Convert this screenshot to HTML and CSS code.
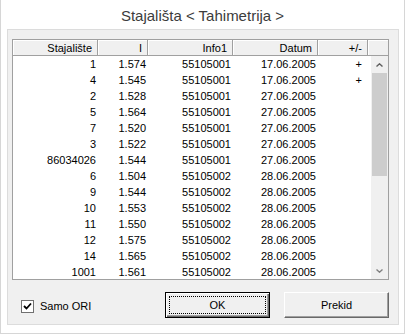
FILE: index.html
```html
<!DOCTYPE html>
<html lang="hr">
<head>
    <meta charset="UTF-8">
    <meta name="viewport" content="width=device-width, initial-scale=1.0">
    <title>Stajališta</title>
    <link rel="stylesheet" href="styles.css">
</head>
<body>
    <div class="window">
        <h1 class="title">Stajališta &lt; Tahimetrija &gt;</h1>

        <div class="panel">
            <div class="list">
                <div class="list-header">
                    <div class="hcell">Stajalište</div>
                    <div class="hcell">I</div>
                    <div class="hcell">Info1</div>
                    <div class="hcell">Datum</div>
                    <div class="hcell">+/-</div>
                    <div class="hcell"></div>
                </div>
                <div class="list-body">
                    <div class="rows">
                        <div class="row"><span>1</span><span>1.574</span><span>55105001</span><span>17.06.2005</span><span class="flag">+</span></div>
                        <div class="row"><span>4</span><span>1.545</span><span>55105001</span><span>17.06.2005</span><span class="flag">+</span></div>
                        <div class="row"><span>2</span><span>1.528</span><span>55105001</span><span>27.06.2005</span><span class="flag"></span></div>
                        <div class="row"><span>5</span><span>1.564</span><span>55105001</span><span>27.06.2005</span><span class="flag"></span></div>
                        <div class="row"><span>7</span><span>1.520</span><span>55105001</span><span>27.06.2005</span><span class="flag"></span></div>
                        <div class="row"><span>3</span><span>1.522</span><span>55105001</span><span>27.06.2005</span><span class="flag"></span></div>
                        <div class="row"><span>86034026</span><span>1.544</span><span>55105001</span><span>27.06.2005</span><span class="flag"></span></div>
                        <div class="row"><span>6</span><span>1.504</span><span>55105002</span><span>28.06.2005</span><span class="flag"></span></div>
                        <div class="row"><span>9</span><span>1.544</span><span>55105002</span><span>28.06.2005</span><span class="flag"></span></div>
                        <div class="row"><span>10</span><span>1.553</span><span>55105002</span><span>28.06.2005</span><span class="flag"></span></div>
                        <div class="row"><span>11</span><span>1.550</span><span>55105002</span><span>28.06.2005</span><span class="flag"></span></div>
                        <div class="row"><span>12</span><span>1.575</span><span>55105002</span><span>28.06.2005</span><span class="flag"></span></div>
                        <div class="row"><span>14</span><span>1.565</span><span>55105002</span><span>28.06.2005</span><span class="flag"></span></div>
                        <div class="row"><span>1001</span><span>1.561</span><span>55105002</span><span>28.06.2005</span><span class="flag"></span></div>
                    </div>
                    <div class="scrollbar">
                        <div class="sb-btn">
                            <svg width="7" height="4" viewBox="0 0 7 4"><polyline points="0.5,3.5 3.5,0.8 6.5,3.5" fill="none" stroke="#606060" stroke-width="1.4"/></svg>
                        </div>
                        <div class="sb-track">
                            <div class="sb-thumb"></div>
                        </div>
                        <div class="sb-btn">
                            <svg width="7" height="4" viewBox="0 0 7 4"><polyline points="0.5,0.5 3.5,3.2 6.5,0.5" fill="none" stroke="#808080" stroke-width="1.4"/></svg>
                        </div>
                    </div>
                </div>
            </div>

            <div class="footer">
                <label class="check">
                    <span class="box">
                        <svg width="9" height="9" viewBox="0 0 9 9"><polyline points="1,4 3.5,6.5 8,1.5" fill="none" stroke="#000" stroke-width="1.8"/></svg>
                    </span>
                    Samo ORI
                </label>
                <button class="btn default"><span class="focus">OK</span></button>
                <button class="btn">Prekid</button>
            </div>
        </div>
    </div>
</body>
</html>
```

FILE: styles.css
```css
body {
    margin: 0;
    background-color: #ffffff;
    font-family: "Liberation Sans", Arial, sans-serif;
    font-size: 11px;
    color: #000000;
}
.window {
    width: 405px;
    height: 334px;
    box-sizing: border-box;
    border: 1px solid #d6d6d6;
    border-top: none;
    background: #ffffff;
}
.title {
    margin: 0;
    height: 29px;
    line-height: 31px;
    text-align: center;
    font-size: 15px;
    font-weight: normal;
    color: #3c3c3c;
}
.panel {
    margin: 0 5px 0 6px;
    background-color: #f0f0f0;
    border: 1px solid #dcdcdc;
    padding: 9px 9px 6px 4px;
}
.list {
    border: 1px solid #a0a0a0;
    background: #ffffff;
    height: 239px;
    display: flex;
    flex-direction: column;
}
.list-header {
    display: grid;
    grid-template-columns: 85px 50px 85px 85px 50px 1fr;
    height: 16px;
}
.hcell {
    background: #f0f0f0;
    border-right: 1px solid #a0a0a0;
    border-bottom: 1px solid #a0a0a0;
    box-shadow: inset 1px 1px #ffffff;
    text-align: right;
    padding-right: 5px;
    line-height: 16px;
    overflow: hidden;
}
.hcell:last-child {
    border-right: none;
}
.list-body {
    flex: 1;
    display: flex;
    overflow: hidden;
}
.rows {
    flex: 1;
    overflow: hidden;
}
.row {
    display: grid;
    grid-template-columns: 84px 50px 85px 85px 50px;
    height: 16px;
    line-height: 16px;
}
.row span {
    text-align: right;
    padding-right: 1px;
}
.row .flag {
    padding-right: 5px;
}
.scrollbar {
    width: 17px;
    display: flex;
    flex-direction: column;
    background: #f0f0f0;
}
.sb-btn {
    height: 17px;
    display: flex;
    align-items: center;
    justify-content: center;
}
.sb-track {
    flex: 1;
}
.sb-thumb {
    height: 103px;
    margin: 0 1px;
    background: #cdcdcd;
}
.footer {
    display: flex;
    align-items: center;
    margin-top: 12px;
    padding: 0 0 0 9px;
    height: 26px;
}
.check {
    flex: 1;
    display: flex;
    align-items: center;
    gap: 6px;
    margin-top: 2px;
}
.box {
    width: 11px;
    height: 11px;
    border: 1px solid #707070;
    background: #ffffff;
    display: flex;
    align-items: center;
    justify-content: center;
}
.btn {
    width: 105px;
    height: 26px;
    margin-left: 14px;
    padding: 0;
    font-family: inherit;
    font-size: 11px;
    color: #000000;
    background: #f0f0f0;
    border: 1px solid;
    border-color: #ffffff #696969 #696969 #ffffff;
    box-shadow: inset -1px -1px #a0a0a0;
}
.btn.default {
    border: 1px solid #000000;
    box-shadow: inset 1px 1px #ffffff, inset -1px -1px #696969, inset -2px -2px #a0a0a0;
    padding: 3px;
}
.focus {
    display: flex;
    align-items: center;
    justify-content: center;
    height: 100%;
    box-sizing: border-box;
    border: 1px dotted #000000;
}
```
